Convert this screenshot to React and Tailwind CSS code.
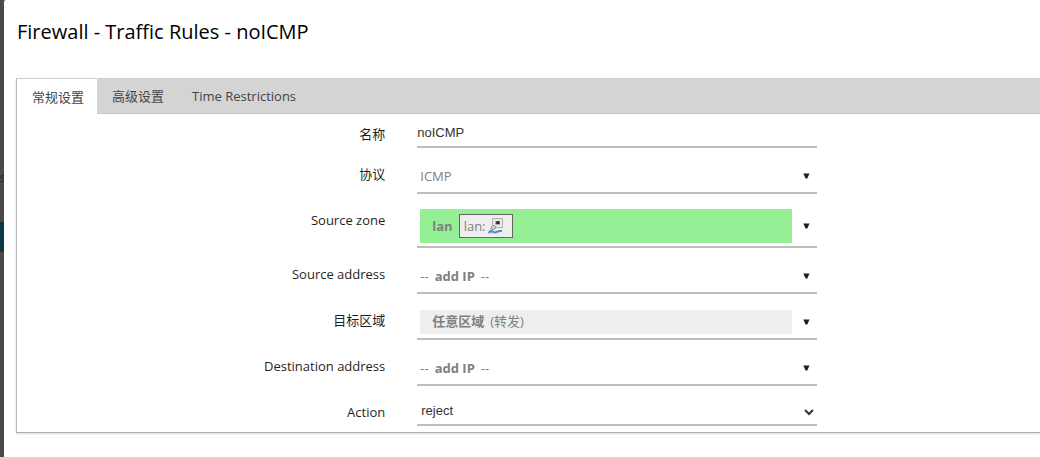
import React from 'react';

const TABS = ['常规设置', '高级设置', 'Time Restrictions'];

function Row({ id, label, children }) {
  return (
    <div className="flex items-start gap-8">
      <label htmlFor={id} className="w-[36%] shrink-0 text-right leading-7 text-[#1f1f1f]">
        {label}
      </label>
      <div className="w-full max-w-[400px] min-w-0">{children}</div>
    </div>
  );
}

function Dropdown({ id, children, tall = false }) {
  return (
    <button
      id={id}
      type="button"
      aria-haspopup="listbox"
      className={
        'flex w-full items-stretch border-b-2 border-[#bdbdbd] pl-[3px] text-left text-[#808080] ' +
        (tall ? 'h-[42px]' : 'h-[34px]')
      }
    >
      <span className="flex min-w-0 flex-1 items-center">{children}</span>
      <span className="flex w-[25px] items-center justify-center pl-[3px]">
        <svg width="7" height="6" viewBox="0 0 7 6" aria-hidden="true">
          <path d="M0.3 0.5h6.2L4.3 5.6H2.6z" fill="#1f1f1f" />
        </svg>
      </span>
    </button>
  );
}

function AddAddress() {
  return (
    <span className="flex gap-[6px] pt-[2px]">
      <span>--</span>
      <strong>add IP</strong>
      <span>--</span>
    </span>
  );
}

function InterfaceIcon() {
  return (
    <svg width="16" height="16" viewBox="0 0 16 16" aria-hidden="true">
      <rect x="4.5" y="0.5" width="10" height="9" fill="#e9e9e6" stroke="#b5b5b0" />
      <rect x="7.5" y="3" width="4.5" height="3.5" fill="#6f705f" />
      <rect x="8.5" y="3.6" width="2.5" height="2.4" fill="#222620" />
      <path d="M7 8L3 12" stroke="#8b8b87" strokeWidth="3" />
      <path d="M7 8L3 12" stroke="#e2e2df" strokeWidth="1.4" />
      <circle cx="5.5" cy="9.5" r="2" fill="#d7d7d3" stroke="#858581" strokeWidth="0.8" />
      <path d="M0.5 15C2 12.5 4 12.5 5 13.7S8 14.4 9.5 13.7 12.5 13 14 12.8" fill="none" stroke="#5d83bd" strokeWidth="2" />
      <path d="M1 14.8Q3 15.2 5 14.2" fill="none" stroke="#7fa0d0" strokeWidth="1" />
    </svg>
  );
}

export default function App() {
  return (
    <div className="flex min-h-screen overflow-hidden bg-[#4c4a47] font-['Open_Sans','Noto_Sans_CJK_SC',sans-serif] text-[13px]">
      <div className="flex w-1 shrink-0 flex-col overflow-hidden" aria-hidden="true">
        <span className="mt-[168px] flex h-5 items-center text-[#262523]">s</span>
        <span className="mt-[34px] h-[30px] bg-[#0b3a47]" />
      </div>
      <main className="min-w-0 flex-1 rounded-tl-[2px] bg-white pl-3">
        <h1 className="pt-[18px] pl-px text-[20px] leading-7 text-black">
          Firewall - Traffic Rules - noICMP
        </h1>
        <section className="mt-8 border-b border-l border-b-[#adadad] border-l-[#bdbdbd] shadow-[0_1px_2px_#00000026]">
          <div role="tablist" className="flex h-9 border-t border-b border-t-[#cfcfcf] border-b-[#c8c8c8] bg-[#d4d4d4]">
            {TABS.map((tab, i) => (
              <button
                key={tab}
                type="button"
                role="tab"
                aria-selected={i === 0}
                className={
                  'pt-[2px] pr-[13px] pl-[15px] text-[#444444] ' + (i === 0 ? '-mb-px bg-white' : '')
                }
              >
                {tab}
              </button>
            ))}
          </div>
          <form className="flex flex-col gap-3 py-[6px]">
            <Row id="name" label="名称">
              <input
                id="name"
                type="text"
                defaultValue="noICMP"
                className="block h-7 w-full border-b-2 border-[#bdbdbd] pb-[2px] font-['Liberation_Sans',sans-serif] text-[13px] text-[#333333] outline-none"
              />
            </Row>
            <Row id="proto" label="协议">
              <Dropdown id="proto">
                <span className="pt-[2px]">ICMP</span>
              </Dropdown>
            </Row>
            <Row id="src" label="Source zone">
              <Dropdown id="src" tall>
                <span className="flex h-[34px] w-full items-center gap-[6px] bg-[#95f095] pl-3">
                  <strong className="pt-[2px]">lan</strong>
                  <span className="flex h-6 items-center gap-[2px] border border-[#666666] bg-[#eeeeee] pr-2 pl-1">
                    <span className="pt-[2px]">lan:</span>
                    <InterfaceIcon />
                  </span>
                </span>
              </Dropdown>
            </Row>
            <Row id="src-ip" label="Source address">
              <Dropdown id="src-ip">
                <AddAddress />
              </Dropdown>
            </Row>
            <Row id="dest" label="目标区域">
              <Dropdown id="dest">
                <span className="flex h-6 w-full items-center gap-[6px] bg-[#eeeeee] pl-3">
                  <strong>任意区域</strong>
                  <span>(转发)</span>
                </span>
              </Dropdown>
            </Row>
            <Row id="dest-ip" label="Destination address">
              <Dropdown id="dest-ip">
                <AddAddress />
              </Dropdown>
            </Row>
            <Row id="action" label="Action">
              <select
                id="action"
                defaultValue="reject"
                className="block h-7 w-full border-b-2 border-[#bdbdbd] bg-transparent pb-px font-['Liberation_Sans',sans-serif] text-[13px] text-[#333333] outline-none"
              >
                <option value="reject">reject</option>
                <option value="accept">accept</option>
                <option value="drop">drop</option>
              </select>
            </Row>
          </form>
        </section>
      </main>
    </div>
  );
}
